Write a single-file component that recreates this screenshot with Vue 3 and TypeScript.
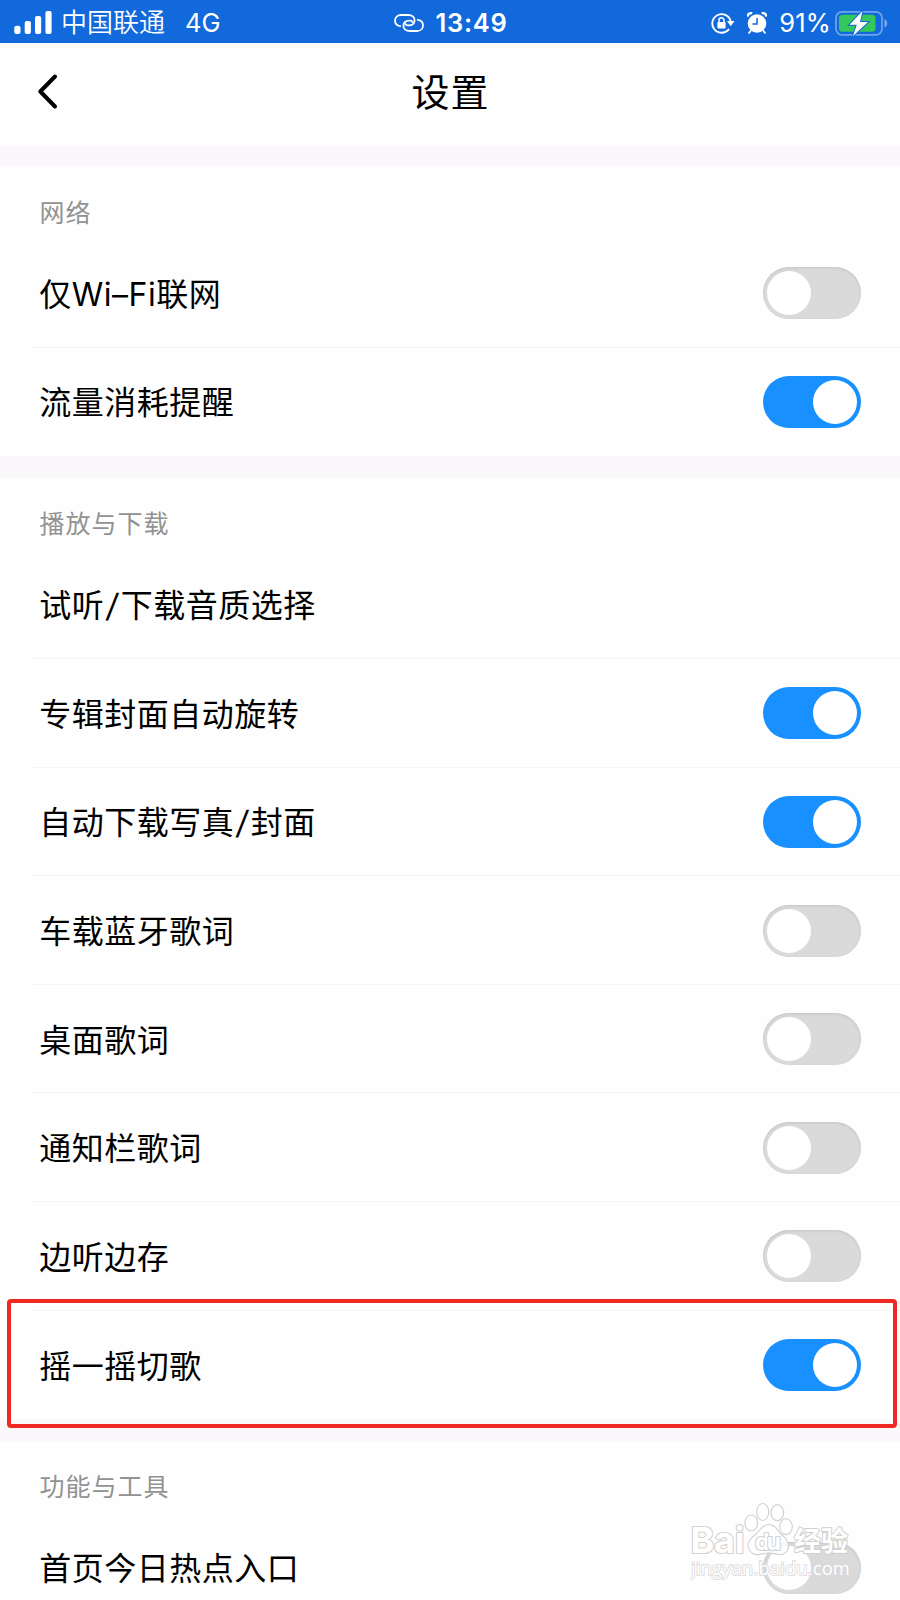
<script setup lang="ts">
interface Row {
  label: string
  state?: 'on' | 'off'
  marked?: boolean
}
interface Section {
  title: string
  rows: Row[]
}

const sections: Section[] = [
  {
    title: '网络',
    rows: [
      { label: '仅Wi–Fi联网', state: 'off' },
      { label: '流量消耗提醒', state: 'on' },
    ],
  },
  {
    title: '播放与下载',
    rows: [
      { label: '试听/下载音质选择' },
      { label: '专辑封面自动旋转', state: 'on' },
      { label: '自动下载写真/封面', state: 'on' },
      { label: '车载蓝牙歌词', state: 'off' },
      { label: '桌面歌词', state: 'off' },
      { label: '通知栏歌词', state: 'off' },
      { label: '边听边存', state: 'off' },
      { label: '摇一摇切歌', state: 'on', marked: true },
    ],
  },
  {
    title: '功能与工具',
    rows: [{ label: '首页今日热点入口', state: 'off' }],
  },
]

// Splits a label so that slashes and Latin runs can be styled on their own.
const parts = (label: string): string[] => label.split(/(\/|[A-Za-z–]+)/).filter(Boolean)
const kind = (part: string): string => (part === '/' ? 'slash' : /^[A-Za-z]/.test(part) ? 'latin' : '')
</script>

<template>
  <div class="screen">
    <header class="status">
      <div class="side">
        <svg class="signal" width="38" height="24" viewBox="0 0 38 24" fill="#fff">
          <rect x="0.3" y="14.8" width="6.2" height="8.2" rx="2" />
          <rect x="10.7" y="10" width="6.2" height="13" rx="2" />
          <rect x="21" y="5" width="6.2" height="18" rx="2" />
          <rect x="31.4" y="0" width="6.2" height="23" rx="2" />
        </svg>
        <span class="carrier">中国联通</span>
        <span class="net">4G</span>
      </div>
      <div class="middle">
        <svg width="30" height="18" viewBox="0 0 30 18" fill="none" stroke="#fff" stroke-width="1.8" stroke-linecap="round">
          <path d="M6.2 12.2C3 11.8 1 9.6 1 6.6C1 3.3 3.5 1 7 1H14.2C18 1 20.6 3.2 20.6 6.2C20.6 9.4 18.2 11.4 15 11.4H13.4C12.4 11.4 11.8 10.8 11.6 10" />
          <path d="M23.8 5.8C27 6.2 29 8.4 29 11.4C29 14.7 26.5 17 23 17H15.8C12 17 9.4 14.8 9.4 11.8C9.4 8.6 11.8 6.6 15 6.6H16.6C17.6 6.6 18.2 7.2 18.4 8" />
        </svg>
        <span class="time">13:49</span>
      </div>
      <div class="side right">
        <svg class="lock" width="24" height="22" viewBox="0 0 24 22">
          <path d="M17.6 17.6A9.3 9.3 0 1 1 19.7 9.5" fill="none" stroke="#fff" stroke-width="1.9" stroke-linecap="round" />
          <path d="M16 9H23.5L19.7 14.2Z" fill="#fff" />
          <rect x="6.4" y="10" width="8.2" height="6.4" rx="1" fill="#fff" />
          <path d="M8 10.5V8.2A2.5 2.5 0 0 1 13 8.2V10.5" fill="none" stroke="#fff" stroke-width="1.5" />
        </svg>
        <svg class="alarm" width="20" height="22" viewBox="0 0 20 22">
          <circle cx="10" cy="11.5" r="9.3" fill="#fff" />
          <path d="M0.9 4.6A3 3 0 0 1 5.2 1.5M19.1 4.6A3 3 0 0 0 14.8 1.5" fill="none" stroke="#fff" stroke-width="2.4" />
          <path d="M4 18.5L2 20.8M16 18.5L18 20.8" stroke="#fff" stroke-width="1.8" stroke-linecap="round" />
          <path d="M10 6V12H5.4" fill="none" stroke="#1269db" stroke-width="1.5" />
        </svg>
        <span class="pct">91%</span>
        <svg class="battery" width="54" height="27" viewBox="0 0 54 27">
          <rect x="1" y="1.8" width="46" height="23" rx="6" fill="none" stroke="#6fa4ea" stroke-width="1.7" />
          <path d="M49.5 9C53 10.2 53 16.4 49.5 17.6Z" fill="#7cabea" />
          <rect x="4" y="4.8" width="36.5" height="17" rx="3.5" fill="#35c759" />
          <path d="M27.5 1L14.5 14.8H21.8L18 26L33 12H25Z" fill="#fff" stroke="#1269db" stroke-width="2" paint-order="stroke" />
        </svg>
      </div>
    </header>

    <nav class="nav">
      <svg class="back" width="22" height="38" viewBox="0 0 22 38">
        <path d="M19 3.5L4.3 18.5L19 33.5" fill="none" stroke="#000" stroke-width="4" stroke-linecap="round" stroke-linejoin="round" />
      </svg>
      <h1>设置</h1>
    </nav>

    <section v-for="section in sections" :key="section.title" class="section">
      <h2>{{ section.title }}</h2>
      <div v-for="row in section.rows" :key="row.label" class="row">
        <span class="label"><span v-for="(part, i) in parts(row.label)" :key="i" :class="kind(part)">{{ part }}</span></span>
        <span v-if="row.state" class="switch" :class="row.state"><i class="knob" /></span>
        <span v-if="row.marked" class="mark" />
      </div>
    </section>

    <svg class="watermark" width="170" height="84" viewBox="0 0 170 84">
      <g fill="#fff" fill-opacity="0.8" stroke="#d2d2d2" stroke-width="1.2">
        <ellipse cx="61.3" cy="23" rx="6.3" ry="8" />
        <ellipse cx="72.7" cy="12" rx="6" ry="8.5" />
        <ellipse cx="87.3" cy="12.7" rx="6.3" ry="8" />
        <ellipse cx="96" cy="26.7" rx="6.3" ry="8" />
        <path d="M78.5 24.5C72 24.5 70 31 65 35C58 40 56.5 46 60 51C65 58 72 53 79 53C86 53 92 58 97 51C100 46 98 40 92 35C87 31 86 24.5 78.5 24.5Z" />
      </g>
      <g class="brand" stroke-linejoin="round">
        <text x="0.5" y="52.5" font-size="36" textLength="54">Bai</text>
        <text class="du" x="65" y="49.5" font-size="23" textLength="26">du</text>
        <text x="104" y="50.5" font-size="27" textLength="54">经验</text>
      </g>
      <text class="url" x="1" y="74.5" font-size="18.5" textLength="159">jingyan.baidu.com</text>
    </svg>
  </div>
</template>

<style>
body {
  background: #fefefe;
}
</style>

<style scoped>
.screen {
  position: relative;
  width: 900px;
  height: 1600px;
  overflow: hidden;
  background: #fefefe;
  color: #000;
  font-family: Inter, 'Noto Sans CJK SC', sans-serif;
}
.status {
  display: grid;
  grid-template-columns: 1fr auto 1fr;
  align-items: center;
  height: 43px;
  padding: 3px 11px 0 14px;
  box-sizing: border-box;
  background: #1269db;
  color: #fff;
  line-height: 40px;
}
.side,
.middle {
  display: flex;
  align-items: center;
  height: 40px;
  white-space: nowrap;
}
.middle {
  margin-right: 2px;
}
.right {
  justify-content: flex-end;
}
.carrier {
  margin-left: 9px;
  font-size: 26px;
  font-weight: 350;
}
.net {
  margin-left: 20px;
  font-size: 25.5px;
}
.time {
  margin-left: 12px;
  font-size: 25.5px;
  font-weight: 580;
  letter-spacing: 0.7px;
}
.alarm {
  margin-left: 12px;
}
.pct {
  margin-left: 12px;
  font-size: 25.5px;
  letter-spacing: 0.2px;
}
.battery {
  margin-left: 4px;
}
.nav {
  display: grid;
  grid-template-columns: 120px 1fr 120px;
  align-items: center;
  height: 102px;
  padding-bottom: 5px;
  box-sizing: border-box;
}
.back {
  margin-left: 36px;
}
h1 {
  margin: 0;
  padding-left: 1px;
  font-size: 38px;
  font-weight: 400;
  letter-spacing: 1px;
  line-height: 60px;
  text-align: center;
}
.section {
  border-top: 22px solid #faf8fa;
}
h2 {
  margin: 0;
  height: 72px;
  padding: 11px 0 0 39.5px;
  box-sizing: border-box;
  color: #929292;
  font-size: 25px;
  font-weight: 400;
  letter-spacing: 1px;
  line-height: 70px;
}
.row {
  position: relative;
  display: flex;
  align-items: center;
  justify-content: space-between;
  height: 108.65px;
  padding: 0 39px;
}
.row + .row::before {
  content: '';
  position: absolute;
  left: 32px;
  right: 0;
  top: -1px;
  height: 1px;
  background: #f4f4f4;
}
.label {
  padding: 3px 0 0 0.3px;
  font-size: 32px;
  letter-spacing: 0.5px;
  line-height: 48px;
}
.latin {
  letter-spacing: 0.5px;
}
.slash {
  display: inline-block;
  width: 16.5px;
  text-align: center;
  letter-spacing: 0;
  transform: skewX(-7deg);
}
.switch {
  display: flex;
  width: 98px;
  height: 52px;
  padding: 4px;
  box-sizing: border-box;
  border-radius: 26px;
  background: #dadada;
  box-shadow: inset 0 1px 3px #c4c4c4;
}
.switch.on {
  justify-content: flex-end;
  background: #1890ff;
  box-shadow: none;
}
.knob {
  width: 44px;
  height: 44px;
  border-radius: 50%;
  background: #fff;
}
.mark {
  position: absolute;
  left: 7px;
  right: 3px;
  top: -12px;
  height: 129px;
  box-sizing: border-box;
  border: 4px solid #f02822;
  border-radius: 4px;
}
.watermark {
  position: absolute;
  left: 690px;
  top: 1500px;
}
.brand text {
  fill: #fff;
  stroke: #d0d0d0;
  stroke-width: 2px;
  paint-order: stroke;
  font-weight: 700;
}
.url {
  fill: #fff;
  stroke: #d8d8d8;
  stroke-width: 1.6px;
  paint-order: stroke;
  font-family: 'Open Sans', sans-serif;
}
</style>
